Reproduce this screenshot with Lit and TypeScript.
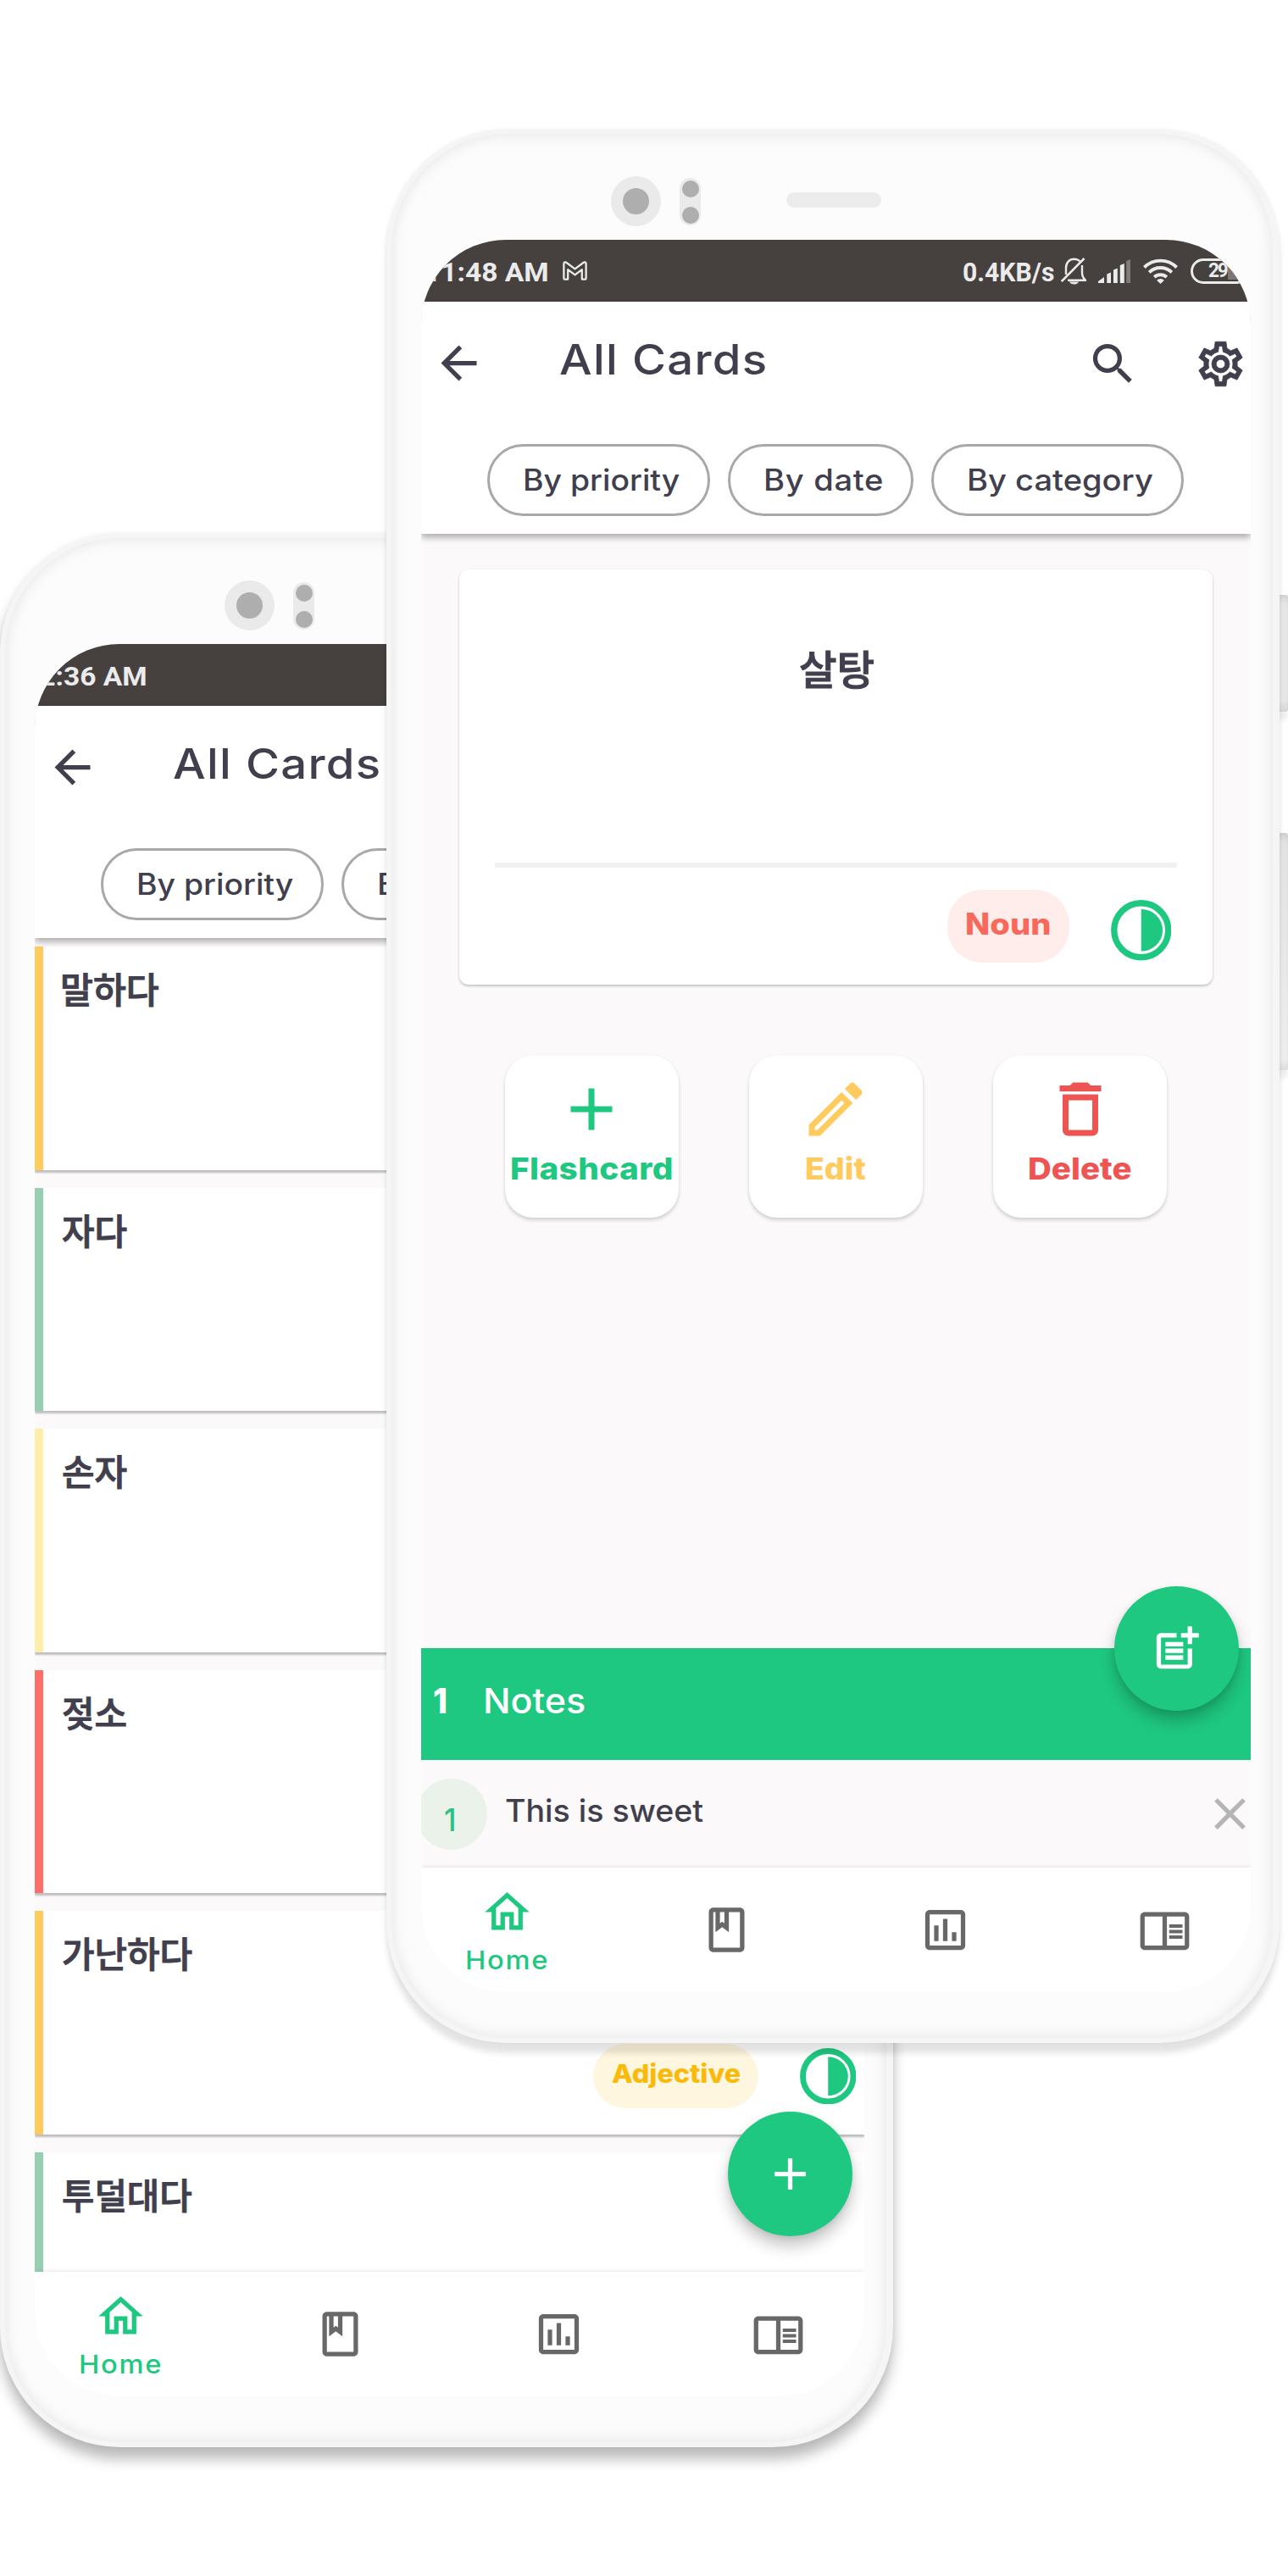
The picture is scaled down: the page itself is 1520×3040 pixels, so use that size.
import { LitElement, html, css, svg, nothing, TemplateResult } from "lit";
import { customElement, property } from "lit/decorators.js";
import { styleMap } from "lit/directives/style-map.js";

/* Single line of text, widened and letter-spaced to fill a given ink width. */
@customElement("fit-text")
class FitText extends LitElement {
  @property() text = "";
  @property({ type: Number }) w = 100;

  static styles = css`
    :host { display: block; flex: none; white-space: nowrap; }
    .run { display: block; white-space: pre; transform-origin: 0 50%; }
  `;

  render() {
    return html`<span class="run">${this.text}</span>`;
  }

  updated() {
    const run = this.renderRoot.querySelector(".run") as HTMLElement;
    const ctx = document.createElement("canvas").getContext("2d");
    if (!run || !ctx) return;
    const cs = getComputedStyle(run);
    ctx.font = `${cs.fontWeight} ${cs.fontSize} ${cs.fontFamily}`;
    const m = ctx.measureText(this.text);
    const ink = m.actualBoundingBoxLeft + m.actualBoundingBoxRight;
    const gaps = Array.from(this.text).length - 1;
    const stretch = Math.max(0.94, Math.min(1.09, this.w / ink));
    this.style.width = `${this.w}px`;
    run.style.width = `${this.w}px`;
    run.style.marginLeft = `${m.actualBoundingBoxLeft * stretch}px`;
    run.style.transform = `scaleX(${stretch})`;
    run.style.letterSpacing = gaps > 0 ? `${(this.w / stretch - ink) / gaps}px` : "0";
  }
}

const glyphs: Record<string, TemplateResult> = {
  back: svg`<path d="M20 11H7.83l5.59-5.59L12 4l-8 8 8 8 1.41-1.41L7.83 13H20v-2z"/>`,
  search: svg`<path d="M15.5 14h-.79l-.28-.27A6.47 6.47 0 0 0 16 9.5 6.5 6.5 0 1 0 9.5 16c1.61 0 3.09-.59 4.23-1.57l.27.28v.79l5 4.99L20.49 19l-4.99-5zm-6 0a4.5 4.5 0 1 1 0-9 4.5 4.5 0 0 1 0 9z"/>`,
  cog: svg`<path stroke="currentColor" stroke-width=".3" d="M12,8A4,4 0 0,1 16,12A4,4 0 0,1 12,16A4,4 0 0,1 8,12A4,4 0 0,1 12,8M12,10A2,2 0 0,0 10,12A2,2 0 0,0 12,14A2,2 0 0,0 14,12A2,2 0 0,0 12,10M9.6,22L9.13,18.93C8.5,18.68 7.96,18.34 7.44,17.94L4.6,19.1L2.2,14.85L4.57,12.97L4.5,12L4.57,11L2.2,9.15L4.6,4.9L7.44,6.05C7.96,5.66 8.5,5.32 9.13,5.07L9.6,2H14.4L14.87,5.07C15.5,5.32 16.04,5.66 16.56,6.05L19.4,4.9L21.8,9.15L19.43,11L19.5,12L19.43,13L21.8,14.85L19.4,19.1L16.56,17.95C16.04,18.34 15.5,18.68 14.87,18.93L14.4,22H9.6M11.25,4L10.88,6.61C9.68,6.86 8.62,7.5 7.85,8.39L5.44,7.35L4.69,8.65L6.8,10.2C6.4,11.37 6.4,12.64 6.8,13.8L4.68,15.36L5.43,16.66L7.86,15.62C8.63,16.5 9.68,17.14 10.87,17.38L11.24,20H12.76L13.13,17.39C14.32,17.14 15.37,16.5 16.14,15.62L18.57,16.66L19.32,15.36L17.2,13.81C17.6,12.64 17.6,11.37 17.2,10.2L19.31,8.65L18.56,7.35L16.15,8.39C15.38,7.5 14.32,6.86 13.12,6.62L12.75,4H11.25Z"/>`,
  add: svg`<path d="M19 13h-6v6h-2v-6H5v-2h6V5h2v6h6v2z"/>`,
  edit: svg`<path d="M14.06 9.02l.92.92L5.92 19H5v-.92l9.06-9.06M17.66 3c-.25 0-.51.1-.7.29l-1.83 1.83 3.75 3.75 1.83-1.83c.39-.39.39-1.02 0-1.41l-2.34-2.34c-.2-.2-.45-.29-.71-.29zm-3.6 3.19L3 17.25V21h3.75L17.81 9.94l-3.75-3.75z"/>`,
  trash: svg`<path d="M16 9v10H8V9h8m-1.5-6h-5l-1 1H5v2h14V4h-3.5l-1-1zM18 7H6v12c0 1.1.9 2 2 2h8c1.1 0 2-.9 2-2V7z"/>`,
  postAdd: svg`<path d="M17 19.22H5V7h7V5H5c-1.1 0-2 .9-2 2v12c0 1.1.9 2 2 2h12c1.1 0 2-.9 2-2v-7h-2v7.22zM19 2h-2v3h-3v2h3v3h2V7h3V5h-3V2zM7 9h8v2H7zM7 12h8v2H7zM7 15h8v2H7z"/>`,
  close: svg`<path d="M19 6.41L17.59 5 12 10.59 6.41 5 5 6.41 10.59 12 5 17.59 6.41 19 12 13.41 17.59 19 19 17.59 13.41 12z"/>`,
  home: svg`<path d="M12 5.69l5 4.5V18h-2v-6H9v6H7v-7.81l5-4.5M12 3L2 12h3v8h6v-6h2v6h6v-8h3L12 3z"/>`,
  book: svg`<path d="M18 2H6c-1.1 0-2 .9-2 2v16c0 1.1.9 2 2 2h12c1.1 0 2-.9 2-2V4c0-1.1-.9-2-2-2zM9 4h2v5l-1-.75L9 9V4zm9 16H6V4h1v9l3-2.25L13 13V4h5v16z"/>`,
  chart: svg`<path d="M19 3H5c-1.1 0-2 .9-2 2v14c0 1.1.9 2 2 2h14c1.1 0 2-.9 2-2V5c0-1.1-.9-2-2-2zm0 16H5V5h14v14zM7 10h2v7H7zM11 7h2v10h-2zM15 13h2v4h-2z"/>`,
  reader: svg`<path d="M21 4H3c-1.1 0-2 .9-2 2v13c0 1.1.9 2 2 2h18c1.1 0 2-.9 2-2V6c0-1.1-.9-2-2-2zM3 19V6h8v13H3zm18 0h-8V6h8v13zm-7-9.5h6V11h-6zm0 2.5h6v1.5h-6zm0 2.5h6V16h-6z"/>`,
};

const icon = (name: string) =>
  html`<svg class="icon ${name}" viewBox="0 0 24 24">${glyphs[name]}</svg>`;

const dial = () => html`
  <svg class="dial" viewBox="0 0 72 72">
    <circle cx="36" cy="36" r="32.2" fill="none" stroke="currentColor" stroke-width="7.4" />
    <path d="M36 11A25.5 25 0 0 1 36 61Z" fill="currentColor" />
  </svg>`;

const mailIcon = html`
  <svg class="mail" viewBox="0 0 29 23">
    <path d="M1.4 20.4V3.2C1.4 1.2 3.4 1 4.6 2L14.5 9.4 24.4 2c1.2-1 3.2-.8 3.2 1.2v17.2c0 .8-.4 1.2-1.2 1.2h-3.6V10.2l-8.3 6.2-8.3-6.2v11.4H2.6c-.8 0-1.2-.4-1.2-1.2z"
      fill="none" stroke="currentColor" stroke-width="2.3" stroke-linejoin="round" />
  </svg>`;

const bellIcon = html`
  <svg class="bell" viewBox="0 0 30 32">
    <path d="M6 20V12C6 6 10 1.800 15.500 1.800c3 0 5 .800 7 2.700M25 9v9c0 4 1 6 4 8.700H8" fill="none" stroke="currentColor" stroke-width="2.400" />
    <path d="M.8 28L27.500 1" stroke="currentColor" stroke-width="2.600" fill="none" />
    <path d="M10 28.500h11c-1.500 4-9.500 4-11 0z" fill="currentColor" />
  </svg>`;

const signalIcon = html`
  <svg class="signal" viewBox="0 0 38 28" fill="currentColor">
    <path d="M0 28v-2l7-5v7zM10.300 28V17.500l4.700-2V28zM18 28V12.500l4.800-2V28zM25.800 28V7l5-2v23z" />
    <path d="M33.200 28V2l4.800-2v28z" opacity=".35" />
  </svg>`;

const wifiIcon = html`
  <svg class="wifi" viewBox="0 0 41 30" fill="none" stroke="currentColor" stroke-width="3.900">
    <path d="M1.400 10.500a27 27 0 0 1 38.200 0M7.200 16.400a19 19 0 0 1 26.600 0M13.200 22a11 11 0 0 1 14.600 0" />
    <path d="M20.500 30l-4.200-4c1-2.800 7.400-2.800 8.400 0z" fill="currentColor" stroke="none" />
  </svg>`;

const batteryIcon = html`
  <div class="battery"><fit-text class="level" text="29" w="23"></fit-text><span class="drain"></span></div>`;

interface Word { text: string; w: number; color: string; tag?: string }

const words: Word[] = [
  { text: "말하다", w: 113, color: "#ffcb5e" },
  { text: "자다", w: 75.5, color: "#97cfb5" },
  { text: "손자", w: 75.5, color: "#ffedac" },
  { text: "젖소", w: 74.5, color: "#ff6f69" },
  { text: "가난하다", w: 152.5, color: "#ffcb5e", tag: "Adjective" },
  { text: "투덜대다", w: 152, color: "#97cfb5" },
];

const filters = [
  { text: "By priority", w: 183, cls: "priority" },
  { text: "By date", w: 137.5, cls: "date" },
  { text: "By category", w: 217.5, cls: "category" },
];

@customElement("phone-mock")
class PhoneMock extends LitElement {
  @property() view: "list" | "detail" = "list";

  static styles = css`
    * { box-sizing: border-box; }
    :host { display: block; color: #413f4d; isolation: isolate; }
    .icon { display: block; flex: none; width: 63px; height: 63px; fill: currentColor; }

    .body {
      width: 1054px; height: 2259px; border-radius: 142px; background: #f5f5f5;
      padding: 6px 8px 6px 6px; position: relative;
    }
    .body.detail { box-shadow: 0 12px 7px rgba(0,0,0,.11), 0 0 5px rgba(0,0,0,.04); }
    .body.list { box-shadow: 0 14px 16px rgba(0,0,0,.27), 0 0 6px rgba(0,0,0,.05); }
    .bezel {
      height: 100%; border-radius: 136px; background: #fcfcfc; padding: 0 26px 0 35px;
      box-shadow: inset 0 0 18px rgba(0,0,0,.1); display: flex; flex-direction: column;
    }
    .sensors { height: 125px; flex: none; display: flex; align-items: flex-start; padding: 50px 0 0 224px; }
    .camera { width: 59px; height: 59px; border-radius: 50%; background: #eaeaea; display: grid; place-items: center; }
    .lens { width: 31px; height: 31px; border-radius: 50%; background: #aeaeae; }
    .pair {
      width: 25px; height: 56px; margin: 2px 0 0 22px; border-radius: 13px; background: #eaeaea;
      display: flex; flex-direction: column; justify-content: space-between; align-items: center; padding: 3px 0 2px;
    }
    .dot { width: 20px; height: 20px; border-radius: 50%; background: #aeaeae; }
    .speaker { width: 112px; height: 17.5px; margin: 19px 0 0 101px; border-radius: 9px; background: #ececec; }

    .screen {
      width: 979px; height: 2068px; border-radius: 100px; overflow: hidden; position: relative;
      background: #fbf9fa; display: flex; flex-direction: column;
    }
    .status {
      flex: none; height: 73px; background: #46413f; color: #ebebeb; display: flex; align-items: center;
      font: 700 32px/73px Roboto, sans-serif; padding-right: 1px;
    }
    .clock { margin: 3px 0 0 6px; }
    .list .clock { margin-left: -12px; }
    .mail { width: 29px; height: 23px; margin: 0 auto 0 18px; }
    .speed { margin: 3px 0 0; }
    .bell { width: 30px; height: 32px; margin-left: 8px; }
    .signal { width: 38px; height: 28px; margin-left: 14px; }
    .wifi { width: 41px; height: 30px; margin-left: 15px; }
    .battery {
      width: 70px; height: 30px; margin-left: 15px; border: 3px solid #ebebeb; border-radius: 15px;
      display: flex; align-items: center; padding-left: 18px; overflow: hidden;
      font: 700 24px/25px Roboto, sans-serif;
    }
    .drain { height: 20px; flex: 1; background: #7b7776; }

    .header { flex: none; height: 274px; background: #fff; padding-top: 36px; z-index: 1; box-shadow: 0 4px 8px rgba(0,0,0,.33); }
    .toolbar { display: flex; align-items: flex-start; height: 63px; padding: 0 4.5px 0 13px; }
    .back { margin-top: 5px; }
    .title { font: 550 50px/63px Inter, sans-serif; margin: 1px auto 0 88px; }
    .search { margin: 6px 63.5px 0 0; }
    .cog { margin-top: 6px; }
    .filters { display: flex; gap: 21.5px; padding: 69px 0 0 78px; }
    .pill {
      height: 85px; border: 3px solid #a8a8a8; border-radius: 43px; padding-left: 41px;
      font: 550 35px/79px Inter, sans-serif;
    }
    .priority { width: 262.5px; }
    .date { width: 218.5px; }
    .category { width: 298px; }

    .content { flex: 1; min-height: 0; display: flex; flex-direction: column; overflow: hidden; }
    .tag { font-family: Inter, sans-serif; font-weight: 800; }
    .dial { display: block; color: #1ec880; }
    .fab {
      position: absolute; right: 14px; width: 147px; height: 147px; border-radius: 50%; background: #1ec880;
      color: #fff; display: grid; place-items: center; box-shadow: 0 12px 18px rgba(0,0,0,.22), 0 2px 6px rgba(0,0,0,.08); z-index: 2;
    }
    .list .fab { top: 1732px; }
    .detail .fab { top: 1589px; }

    .rows { padding-top: 10px; gap: 21px; }
    .row {
      flex: none; height: 263.5px; background: #fff; border-left: 10px solid; padding: 20px 10px 0 23px;
      box-shadow: 0 2.5px 2px rgba(0,0,0,.24);
    }
    .word { font: 500 42px/60px "Noto Sans CJK KR", sans-serif; color: #413f4d; margin-top: -1px; -webkit-text-stroke: 1px #413f4d; }
    .meta { display: flex; justify-content: flex-end; gap: 48.5px; padding-top: 78px; align-items: center; }
    .meta .tag { width: 195.5px; height: 75.5px; border-radius: 38px; background: #fff6df; color: #fbb90a; padding-left: 22px; font-size: 30px; line-height: 70px; }
    .meta .dial { width: 66.5px; height: 66.5px; }

    .card { flex: none; margin: 42px 45px 0; height: 489.5px; background: #fff; border-radius: 11px; box-shadow: 0 2px 3px rgba(0,0,0,.2), 0 0 2px rgba(0,0,0,.08); }
    .front { height: 346px; padding: 85px 0 0 1px; display: flex; justify-content: center; font: 500 48px/60px "Noto Sans CJK KR", sans-serif; -webkit-text-stroke: 1px #413f4d; }
    .rule { height: 6px; margin: 0 42px; background: #f1f1f1; }
    .foot { display: flex; justify-content: flex-end; padding: 26px 49px 0 0; gap: 48.5px; }
    .foot .tag { width: 144.5px; height: 86px; border-radius: 41px; background: #ffedeb; color: #f9695b; padding-left: 23px; font-size: 35px; line-height: 80px; }
    .foot .dial { width: 71.5px; height: 71.5px; margin-top: 12px; }

    .actions { display: flex; gap: 83.3px; padding: 83.5px 0 0 98.7px; }
    .action {
      width: 205px; height: 192px; border-radius: 33px; background: #fff; padding-top: 22px; display: flex;
      flex-direction: column; align-items: center; font: 800 35.5px/57px Inter, sans-serif;
      box-shadow: 0 3px 4px rgba(0,0,0,.16), 0 0 2px rgba(0,0,0,.06);
    }
    .action .icon { width: 84px; height: 84px; }
    .green { color: #1ec880; }
    .amber { color: #ffcb5e; }
    .red { color: #ee5552; }

    .notes { flex: none; margin-top: auto; height: 132px; background: #1ec880; color: #fff; display: flex; font: 500 41px/124px Inter, sans-serif; padding-left: 15px; }
    .count { font-weight: 800; }
    .notes .label { margin-left: 47.5px; }
    .note { flex: none; height: 127px; display: flex; align-items: flex-start; font: 550 37px/120px Inter, sans-serif; }
    .index { width: 84px; height: 84px; margin: 22px 22.5px 0 -6.5px; border-radius: 50%; background: #eaf2ea; color: #2ac183; padding: 13px 0 0 34.5px; line-height: 71px; }
    .close { margin: 32px -6.5px 0 auto; color: #b5b5b5; }

    .nav { flex: none; height: 147px; background: #fff; z-index: 1; display: flex; box-shadow: 0 -1px 5px rgba(0,0,0,.09); color: #686868; }
    .tab { flex: none; width: 258.5px; display: flex; flex-direction: column; align-items: center; padding-top: 42px; }
    .tab.home-tab { margin-left: -27.5px; padding-top: 21px; color: #1ec880; font: 500 30px/51px Inter, sans-serif; }
  `;

  private list() {
    return html`<div class="content rows">
      ${words.map(w => html`
        <div class="row" style=${styleMap({ borderLeftColor: w.color })}>
          <fit-text class="word" .text=${w.text} .w=${w.w}></fit-text>
          ${w.tag
            ? html`<div class="meta"><div class="tag"><fit-text .text=${w.tag} .w=${152}></fit-text></div>${dial()}</div>`
            : nothing}
        </div>`)}
    </div>
    <div class="fab">${icon("add")}</div>`;
  }

  private detail() {
    return html`<div class="content">
      <div class="card">
        <div class="front"><fit-text text="살탕" w="87"></fit-text></div>
        <div class="rule"></div>
        <div class="foot">
          <div class="tag"><fit-text text="Noun" w="99"></fit-text></div>
          ${dial()}
        </div>
      </div>
      <div class="actions">
        <div class="action green">${icon("add")}<fit-text text="Flashcard" w="188.5"></fit-text></div>
        <div class="action amber">${icon("edit")}<fit-text text="Edit" w="69"></fit-text></div>
        <div class="action red">${icon("trash")}<fit-text text="Delete" w="120"></fit-text></div>
      </div>
      <div class="notes">
        <fit-text class="count" text="1" w="13.5"></fit-text>
        <fit-text class="label" text="Notes" w="117"></fit-text>
      </div>
      <div class="note">
        <div class="index"><fit-text text="1" w="9"></fit-text></div>
        <fit-text text="This is sweet" w="232.5"></fit-text>
        ${icon("close")}
      </div>
    </div>
    <div class="fab">${icon("postAdd")}</div>`;
  }

  render() {
    const detail = this.view === "detail";
    return html`
      <div class="body ${this.view}">
        <div class="bezel">
          <div class="sensors">
            <div class="camera"><div class="lens"></div></div>
            <div class="pair"><div class="dot"></div><div class="dot"></div></div>
            <div class="speaker"></div>
          </div>
          <div class="screen">
            <div class="status">
              <fit-text class="clock" .text=${detail ? "11:48 AM" : "12:36 AM"} .w=${142.5}></fit-text>
              ${detail
                ? html`${mailIcon}<fit-text class="speed" text="0.4KB/s" w="107"></fit-text>
                    ${bellIcon}${signalIcon}${wifiIcon}${batteryIcon}`
                : nothing}
            </div>
            <div class="header">
              <div class="toolbar">
                ${icon("back")}
                <fit-text class="title" text="All Cards" w="242"></fit-text>
                ${icon("search")}${icon("cog")}
              </div>
              <div class="filters">
                ${filters.map(f => html`<div class="pill ${f.cls}"><fit-text .text=${f.text} .w=${f.w}></fit-text></div>`)}
              </div>
            </div>
            ${detail ? this.detail() : this.list()}
            <div class="nav">
              <div class="tab home-tab">${icon("home")}<fit-text text="Home" w="94.5"></fit-text></div>
              <div class="tab">${icon("book")}</div>
              <div class="tab">${icon("chart")}</div>
              <div class="tab">${icon("reader")}</div>
            </div>
          </div>
        </div>
      </div>`;
  }
}

@customElement("app-root")
class AppRoot extends LitElement {
  static styles = css`
    :host { display: block; }
    .stage { display: grid; width: 1520px; height: 3040px; overflow: hidden; background: #fff; position: relative; grid-template-columns: 1520px; grid-template-rows: 3040px; }
    .back-phone, .front-phone { grid-area: 1 / 1; align-self: start; justify-self: start; }
    .back-phone { margin: 629px 0 0 0; }
    .front-phone { margin: 152px 0 0 456px; z-index: 1; }
    .key {
      position: absolute; left: 1504px; width: 16px; background: #e8e8e8; border-radius: 0 3px 3px 0;
      box-shadow: inset 0 8px 8px -4px rgba(0,0,0,.1), inset 0 -10px 10px -4px rgba(0,0,0,.08), 0 10px 5px rgba(0,0,0,.06);
    }
    .power { top: 702px; height: 138px; }
    .volume { top: 983px; height: 280px; background: linear-gradient(#e4e4e4, #f0f0f0); }
  `;

  render() {
    return html`
      <div class="stage">
        <phone-mock class="back-phone" view="list"></phone-mock>
        <div class="key power"></div>
        <div class="key volume"></div>
        <phone-mock class="front-phone" view="detail"></phone-mock>
      </div>`;
  }
}
